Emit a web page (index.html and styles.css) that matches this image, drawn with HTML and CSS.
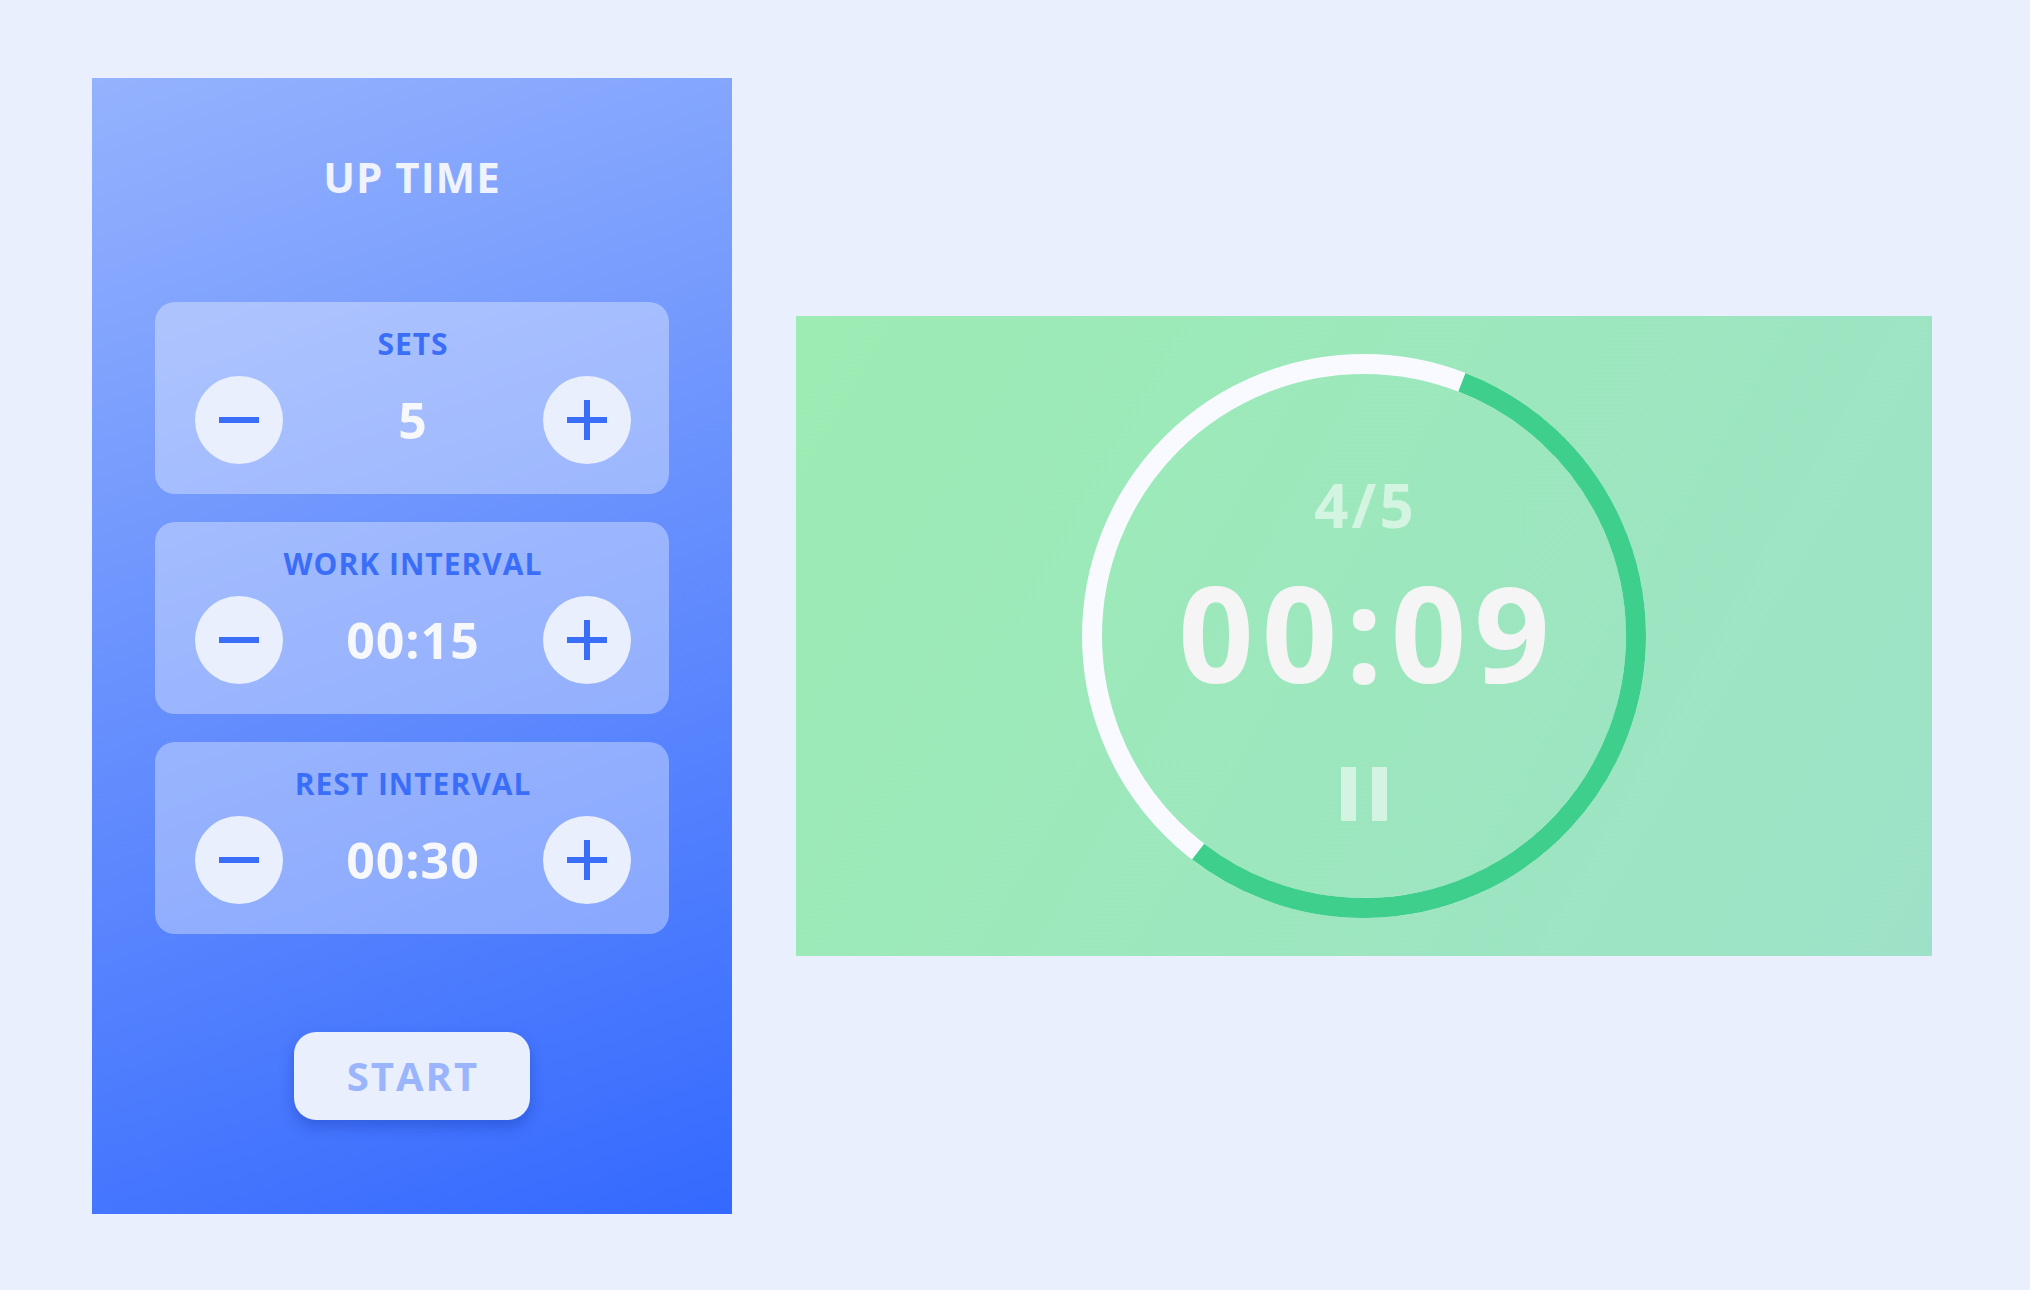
FILE: index.html
```html
<!DOCTYPE html>
<html lang="en">
<head>
<meta charset="utf-8">
<title>Up Time</title>
<link rel="stylesheet" href="styles.css">
</head>
<body>
<main class="page">
  <section class="setup">
    <h1 class="title">UP TIME</h1>
    <div class="cards">
      <div class="card">
        <div class="card-label">SETS</div>
        <div class="stepper">
          <button class="round-btn" aria-label="decrease"><svg width="40" height="40" viewBox="0 0 40 40"><rect x="0" y="17" width="40" height="6"/></svg></button>
          <span class="value">5</span>
          <button class="round-btn" aria-label="increase"><svg width="40" height="40" viewBox="0 0 40 40"><rect x="0" y="17" width="40" height="6"/><rect x="17" y="0" width="6" height="40"/></svg></button>
        </div>
      </div>
      <div class="card">
        <div class="card-label">WORK INTERVAL</div>
        <div class="stepper">
          <button class="round-btn" aria-label="decrease"><svg width="40" height="40" viewBox="0 0 40 40"><rect x="0" y="17" width="40" height="6"/></svg></button>
          <span class="value">00:15</span>
          <button class="round-btn" aria-label="increase"><svg width="40" height="40" viewBox="0 0 40 40"><rect x="0" y="17" width="40" height="6"/><rect x="17" y="0" width="6" height="40"/></svg></button>
        </div>
      </div>
      <div class="card">
        <div class="card-label">REST INTERVAL</div>
        <div class="stepper">
          <button class="round-btn" aria-label="decrease"><svg width="40" height="40" viewBox="0 0 40 40"><rect x="0" y="17" width="40" height="6"/></svg></button>
          <span class="value">00:30</span>
          <button class="round-btn" aria-label="increase"><svg width="40" height="40" viewBox="0 0 40 40"><rect x="0" y="17" width="40" height="6"/><rect x="17" y="0" width="6" height="40"/></svg></button>
        </div>
      </div>
    </div>
    <button class="start-btn">START</button>
  </section>

  <section class="timer">
    <div class="ring">
      <svg class="ring-svg" width="564" height="564" viewBox="0 0 564 564">
        <circle cx="282" cy="282" r="272" fill="none" stroke="#f9faff" stroke-width="20"/>
        <circle cx="282" cy="282" r="272" fill="none" stroke="#3ecf8c" stroke-width="20" stroke-dasharray="932.4 1709" transform="rotate(-68.9 282 282)"/>
      </svg>
      <div class="ring-content">
        <div class="set-count">4/5</div>
        <div class="clock">00:09</div>
        <div class="pause"><span class="bar"></span><span class="bar"></span></div>
      </div>
    </div>
  </section>
</main>
</body>
</html>
```

FILE: styles.css
```css
* { box-sizing: border-box; }

body {
  margin: 0;
  background: #e9effd;
  font-family: "Open Sans", "Liberation Sans", sans-serif;
}

.page {
  display: flex;
  align-items: flex-start;
  gap: 64px;
  padding: 78px 0 0 92px;
  height: 1290px;
}

.setup {
  width: 640px;
  height: 1136px;
  background: linear-gradient(160deg, #94b2fd 0%, #3469fe 100%);
  display: flex;
  flex-direction: column;
  align-items: center;
  padding-top: 78px;
}

.title {
  margin: 0;
  font-size: 42px;
  line-height: 1;
  font-weight: 700;
  letter-spacing: 1px;
  color: #eef3fe;
}

.cards {
  margin-top: 104px;
  display: flex;
  flex-direction: column;
  gap: 28px;
}

.card {
  width: 514px;
  height: 192px;
  border-radius: 20px;
  background: rgba(255, 255, 255, 0.35);
  padding: 27px 38px 30px 40px;
  display: flex;
  flex-direction: column;
  align-items: center;
}

.card-label {
  font-size: 30px;
  line-height: 1;
  font-weight: 700;
  letter-spacing: 1px;
  color: #3b6ef8;
}

.stepper {
  margin-top: 17px;
  width: 100%;
  display: flex;
  align-items: center;
  justify-content: space-between;
}

.round-btn {
  width: 88px;
  height: 88px;
  border: none;
  border-radius: 50%;
  background: #e9effd;
  padding: 0;
  display: flex;
  align-items: center;
  justify-content: center;
}

.round-btn svg { fill: #3b6ef8; display: block; }

.value {
  font-size: 50px;
  line-height: 1;
  font-weight: 700;
  letter-spacing: 1px;
  color: #f7f8fc;
}

.start-btn {
  margin-top: 98px;
  width: 236px;
  height: 88px;
  border: none;
  border-radius: 22px;
  background: #e9effd;
  box-shadow: 0 7px 14px rgba(20, 50, 170, 0.35);
  font-family: "Open Sans", "Liberation Sans", sans-serif;
  font-size: 40px;
  line-height: 1;
  font-weight: 700;
  letter-spacing: 2px;
  color: #9ab5fb;
  padding: 0 0 0 2px;
}

.timer {
  margin-top: 238px;
  width: 1136px;
  height: 640px;
  background: linear-gradient(120deg, #9cecb3 0%, #9de2c8 100%);
  display: flex;
  align-items: center;
  justify-content: center;
}

.ring {
  position: relative;
  width: 564px;
  height: 564px;
}

.ring-svg {
  position: absolute;
  left: 0;
  top: 0;
}

.ring-content {
  position: relative;
  height: 100%;
  display: flex;
  flex-direction: column;
  align-items: center;
  padding-top: 121px;
}

.set-count {
  font-size: 60px;
  line-height: 1;
  font-weight: 700;
  letter-spacing: 3px;
  padding-left: 3px;
  color: rgba(255, 255, 255, 0.55);
}

.clock {
  margin-top: 31px;
  font-size: 132px;
  line-height: 1;
  font-weight: 700;
  letter-spacing: 8px;
  padding-left: 8px;
  color: #f5f5f5;
}

.pause {
  margin-top: 69px;
  display: flex;
  gap: 16px;
}

.bar {
  width: 15px;
  height: 54px;
  background: rgba(255, 255, 255, 0.55);
}
```
